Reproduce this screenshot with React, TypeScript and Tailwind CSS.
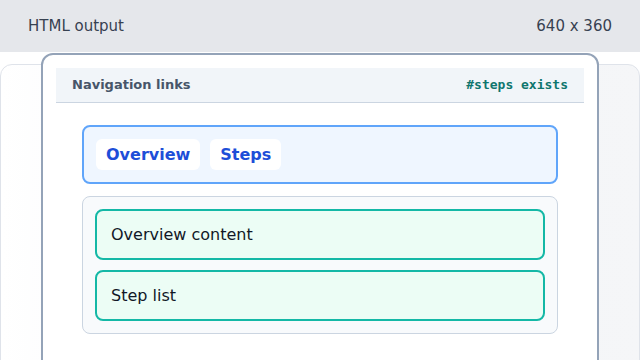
export default function App() {
  return (
    <main
      className="h-[360px] w-[640px] overflow-hidden bg-white"
      style={{ fontFamily: '"DejaVu Sans", sans-serif' }}
    >
      {/* Top bar */}
      <header className="flex h-[52px] items-center justify-between bg-[#e5e7eb] px-[28px] text-[15px] text-[#374151]">
        <span>HTML output</span>
        <span>640 x 360</span>
      </header>

      {/* Stage */}
      <div className="relative h-[308px]">
        <div className="absolute left-0 right-0 top-[12px] h-[320px] rounded-xl border border-[#dfe3ea] bg-gradient-to-r from-white via-[#f3f4f6] to-[#f5f6f8]" />

        <section className="absolute left-[41px] top-[1px] h-[340px] w-[558px] rounded-xl border-2 border-[#94a3b8] bg-white p-[13px]">
          <div className="flex h-[35px] items-center justify-between border-b border-[#cbd5e1] bg-[#f1f5f9] px-[16px]">
            <span className="text-[13px] font-bold text-[#475569]">Navigation links</span>
            <span
              className="text-[13px] font-bold text-[#0f766e]"
              style={{ fontFamily: '"DejaVu Sans Mono", monospace' }}
            >
              #steps exists
            </span>
          </div>

          <div className="px-[26px] pt-[22px]">
            <nav className="flex gap-[10px] rounded-lg border-2 border-[#60a5fa] bg-[#eff6ff] p-[12px]">
              <a className="flex h-[31px] items-center rounded-md bg-white px-[10px] text-[16px] font-bold text-[#1d4ed8]">
                Overview
              </a>
              <a className="flex h-[31px] items-center rounded-md bg-white px-[10px] text-[16px] font-bold text-[#1d4ed8]">
                Steps
              </a>
            </nav>

            <div className="mt-[12px] flex flex-col gap-[10px] rounded-lg border border-[#cbd5e1] bg-[#f8fafc] p-[12px]">
              {["Overview content", "Step list"].map((label) => (
                <div
                  key={label}
                  className="flex h-[51px] items-center rounded-lg border-2 border-[#14b8a6] bg-[#ecfdf5] px-[14px] text-[16px] text-[#111827]"
                >
                  {label}
                </div>
              ))}
            </div>
          </div>
        </section>
      </div>
    </main>
  );
}
